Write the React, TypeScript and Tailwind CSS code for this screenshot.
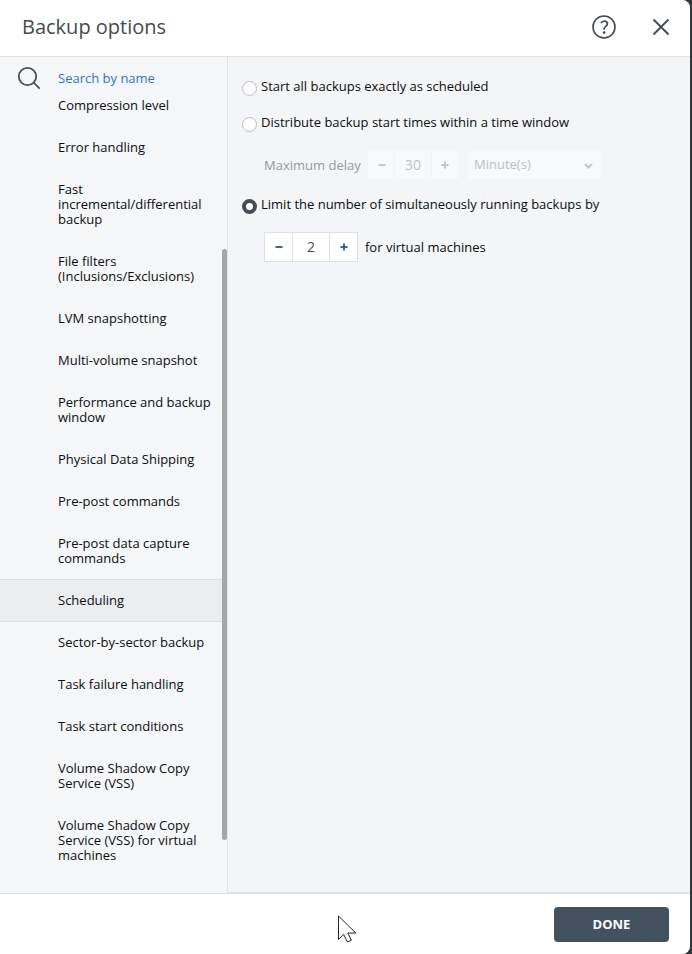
import React, { useLayoutEffect, useRef, useState } from 'react';
import clsx from 'clsx';

const OPTIONS = [
  'Compression level',
  'Error handling',
  'Fast incremental/differential backup',
  'File filters (Inclusions/Exclusions)',
  'LVM snapshotting',
  'Multi-volume snapshot',
  'Performance and backup window',
  'Physical Data Shipping',
  'Pre-post commands',
  'Pre-post data capture commands',
  'Scheduling',
  'Sector-by-sector backup',
  'Task failure handling',
  'Task start conditions',
  'Volume Shadow Copy Service (VSS)',
  'Volume Shadow Copy Service (VSS) for virtual machines',
];

type StepperProps = {
  label: string;
  value: number;
  onChange: (value: number) => void;
  disabled?: boolean;
};

const Stepper: React.FC<StepperProps> = ({ label, value, onChange, disabled }) => {
  const button = clsx(
    'flex items-center justify-center',
    disabled ? 'w-[25px] text-[#c3c6ca]' : 'w-[27px] text-[#3766a3]'
  );

  return (
    <div
      className={clsx(
        'flex border',
        disabled
          ? 'h-7 w-[90px] border-[#f8f9fb] bg-[#f8f9fb]'
          : 'h-[30px] w-[94px] border-[#dce0e6] bg-white'
      )}
    >
      <button
        type="button"
        aria-label={`Decrease ${label}`}
        disabled={disabled}
        onClick={() => onChange(Math.max(1, value - 1))}
        className={button}
      >
        <svg width="8" height="8" viewBox="0 0 8 8" stroke="currentColor" strokeWidth="2">
          <path d="M0.5 4h7" />
        </svg>
      </button>
      <input
        type="text"
        aria-label={label}
        value={value}
        disabled={disabled}
        onChange={(e) => onChange(Number(e.target.value) || 1)}
        className={clsx(
          'min-w-0 flex-1 border-x text-center text-sm outline-none',
          disabled ? 'border-[#f1f3f5] text-[#bcbfc3]' : 'border-[#dce0e6] text-[#45494f]'
        )}
      />
      <button
        type="button"
        aria-label={`Increase ${label}`}
        disabled={disabled}
        onClick={() => onChange(value + 1)}
        className={button}
      >
        <svg width="8" height="8" viewBox="0 0 8 8" stroke="currentColor" strokeWidth="2">
          <path d="M0.5 4h7M4 0.5v7" />
        </svg>
      </button>
    </div>
  );
};

type RadioProps = {
  label: string;
  checked: boolean;
  onChange: () => void;
};

const Radio: React.FC<RadioProps> = ({ label, checked, onChange }) => (
  <label className="flex h-5 items-center gap-1">
    <input
      type="radio"
      name="schedule"
      checked={checked}
      onChange={onChange}
      className="mt-0.5 size-[15px] shrink-0 appearance-none rounded-full border border-[#b9bdc2] bg-white checked:border-4 checked:border-[#464c55]"
    />
    {label}
  </label>
);

const Header: React.FC = () => (
  <header className="flex h-[57px] shrink-0 items-center justify-between border-b border-[#dfe3e8] bg-white pr-5 pb-0.5 pl-[22px]">
    <h1 className="text-xl text-[#45494f]">Backup options</h1>
    <div className="flex items-center gap-9 text-[#43494f]">
      <button type="button" aria-label="Help">
        <svg width="24" height="26" viewBox="1 0 24 26" fill="none" stroke="currentColor">
          <circle cx="13" cy="13" r="11" strokeWidth="1.6" />
          <path
            d="M9.9 9.1C10.6 7.7 11.8 7 13.2 7c1.900 0 3.200 1.100 3.200 2.700 0 2.600-3.300 2.700-3.300 5.300v.7"
            strokeWidth="1.700"
          />
          <circle cx="13.100" cy="18.600" r="1.300" fill="currentColor" stroke="none" />
        </svg>
      </button>
      <button type="button" aria-label="Close">
        <svg width="18" height="18" viewBox="0 0 18 18" stroke="currentColor" strokeWidth="1.800">
          <path d="M1.500 1.500l15 15M16.500 1.500l-15 15" />
        </svg>
      </button>
    </div>
  </header>
);

const Sidebar: React.FC = () => {
  const [selected, setSelected] = useState('Scheduling');
  const listRef = useRef<HTMLDivElement>(null);

  useLayoutEffect(() => {
    if (listRef.current) listRef.current.scrollTop = 16;
  }, []);

  return (
    <aside className="relative flex w-[228px] shrink-0 flex-col border-r border-[#e0e4e9] bg-[#f5f6f8]">
      <div className="flex h-[43px] shrink-0 items-center gap-4 pl-[17px] text-[#4a4f55]">
        <svg width="25" height="25" viewBox="0 0 25 25" fill="none" stroke="currentColor" strokeWidth="1.800">
          <circle cx="10.500" cy="10.500" r="8.700" />
          <path d="M16.700 16.700l6 6" />
        </svg>
        <input
          type="text"
          aria-label="Search by name"
          placeholder="Search by name"
          className="min-w-0 flex-1 outline-none placeholder:text-[#2f73d2]"
        />
      </div>
      <div ref={listRef} className="min-h-0 flex-1 overflow-y-auto [scrollbar-width:none]">
        <ul className="pb-8">
          {OPTIONS.map((option) => (
            <li key={option} className="-mt-px first:mt-0">
              <button
                type="button"
                onClick={() => setSelected(option)}
                className={clsx(
                  'block w-full border-y py-[13px] pr-4 pl-[58px] text-left leading-[15px]',
                  option === selected ? 'border-[#dbe0e2] bg-[#ebedef]' : 'border-transparent'
                )}
              >
                {option}
              </button>
            </li>
          ))}
        </ul>
      </div>
      <div className="absolute top-[192px] right-0 bottom-[53px] w-[5px] rounded-sm bg-[#a6a6a6]" />
    </aside>
  );
};

const SchedulingPanel: React.FC = () => {
  const [mode, setMode] = useState('limit');
  const [delay, setDelay] = useState(30);
  const [limit, setLimit] = useState(2);
  const delayDisabled = mode !== 'distribute';

  return (
    <main className="min-w-0 flex-1 border-b border-[#e0e2e6] bg-[#f3f5f7] pt-5 pl-3.5">
      <Radio
        label="Start all backups exactly as scheduled"
        checked={mode === 'exact'}
        onChange={() => setMode('exact')}
      />
      <div className="mt-4">
        <Radio
          label="Distribute backup start times within a time window"
          checked={mode === 'distribute'}
          onChange={() => setMode('distribute')}
        />
      </div>
      <div className="mt-[18px] flex items-center pl-[22px]">
        <span className="w-[104px] pt-0.5 text-[#97999c]">Maximum delay</span>
        <Stepper label="Maximum delay" value={delay} onChange={setDelay} disabled={delayDisabled} />
        <div className="relative ml-2.5 w-[133px]">
          <select
            aria-label="Delay unit"
            disabled={delayDisabled}
            className="h-7 w-full appearance-none bg-[#f8f9fb] pl-1.5 text-[#bcbfc3] opacity-100"
          >
            <option>Minute(s)</option>
          </select>
          <svg
            className="pointer-events-none absolute top-3 right-2 text-[#c3c6ca]"
            width="9"
            height="6"
            viewBox="0 0 9 6"
            fill="none"
            stroke="currentColor"
            strokeWidth="2"
          >
            <path d="M1 1l3.500 3.500L8 1" />
          </svg>
        </div>
      </div>
      <div className="mt-4">
        <Radio
          label="Limit the number of simultaneously running backups by"
          checked={mode === 'limit'}
          onChange={() => setMode('limit')}
        />
      </div>
      <div className="mt-[17px] flex items-center gap-[7px] pl-[22px]">
        <Stepper label="Simultaneous backups" value={limit} onChange={setLimit} />
        <span className="pt-0.5">for virtual machines</span>
      </div>
    </main>
  );
};

const Cursor: React.FC = () => (
  <svg
    className="pointer-events-none absolute bottom-[11px] left-[49%] h-[28px] w-[19px]"
    viewBox="0 0 19 28"
    fill="white"
    stroke="#22242a"
    strokeWidth="1"
  >
    <path d="M0.500 1v23.500l5.200-5 3.700 7.500 4-1.800-3.600-7.200h8z" />
  </svg>
);

const App: React.FC = () => (
  <div className="h-screen bg-[#343537] pr-0.5 font-['Open_Sans','Noto_Sans',sans-serif] text-[13px] text-[#0c0d0f]">
    <div className="relative flex h-full flex-col overflow-hidden rounded-r-lg bg-white">
      <Header />
      <div className="flex min-h-0 flex-1">
        <Sidebar />
        <SchedulingPanel />
      </div>
      <footer className="flex h-[61px] shrink-0 items-center justify-end border-t border-[#e0e2e6] bg-white pr-[21px]">
        <button
          type="button"
          className="h-[35px] w-[115px] rounded bg-[#445260] pt-0.5 font-bold text-white"
        >
          DONE
        </button>
      </footer>
      <Cursor />
    </div>
  </div>
);

export default App;
